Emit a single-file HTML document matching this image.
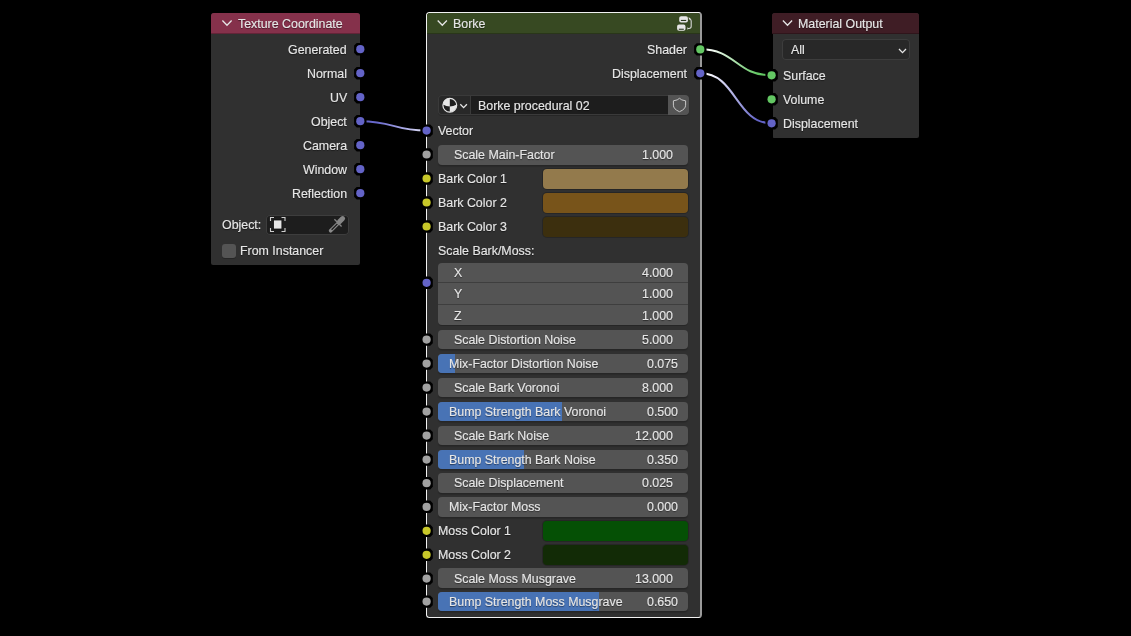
<!DOCTYPE html>
<html><head><meta charset="utf-8"><title>Blender Nodes</title>
<style>
html,body{margin:0;padding:0;background:#000;width:1131px;height:636px;overflow:hidden}
.r{position:absolute}
.t{position:absolute;text-shadow:0 1px 1px rgba(0,0,0,0.5);will-change:transform;font-family:"Liberation Sans",sans-serif;font-size:12.4px;line-height:20px;height:20px;color:#e6e6e6;white-space:nowrap;-webkit-text-stroke:0.15px #e6e6e6}
.ov{position:absolute;left:0;top:0}
</style></head><body>
<svg class="ov" width="1131" height="636" viewBox="0 0 1131 636"><defs>
<linearGradient id="g1" gradientUnits="userSpaceOnUse" x1="700" y1="0" x2="772" y2="0"><stop offset="0" stop-color="#ffffff"/><stop offset="0.2" stop-color="#eef8ee"/><stop offset="0.8" stop-color="#63c763"/><stop offset="1" stop-color="#63c763"/></linearGradient>
<linearGradient id="g2" gradientUnits="userSpaceOnUse" x1="700" y1="0" x2="772" y2="0"><stop offset="0" stop-color="#ffffff"/><stop offset="0.2" stop-color="#eeeefa"/><stop offset="0.8" stop-color="#6363c7"/><stop offset="1" stop-color="#6363c7"/></linearGradient>
<linearGradient id="g3" gradientUnits="userSpaceOnUse" x1="360" y1="0" x2="427" y2="0"><stop offset="0" stop-color="#6363c7"/><stop offset="0.25" stop-color="#6868cc"/><stop offset="0.65" stop-color="#a8a8e6"/><stop offset="1" stop-color="#e8e8f8"/></linearGradient>
</defs><path d="M700.5,49.3 C736.0,49.3 736.0,75.3 771.5,75.3" stroke="url(#g1)" stroke-width="2" fill="none"/><path d="M700.5,73.3 C736.0,73.3 736.0,123.3 771.5,123.3" stroke="url(#g2)" stroke-width="2" fill="none"/><path d="M360.3,121.2 C393.45000000000005,121.2 393.45000000000005,130.6 426.6,130.6" stroke="url(#g3)" stroke-width="2" fill="none"/></svg>
<div class="r" style="left:211px;top:13px;width:149px;height:252px;background:#303030;border-radius:3px 3px 2px 2px;"></div>
<div class="r" style="left:211px;top:13px;width:149px;height:21px;background:#85314b;border-radius:3px 3px 0 0;"></div>
<div class="r" style="left:211px;top:33px;width:149px;height:1px;background:rgba(0,0,0,0.25);border-radius:0;"></div>
<div class="t" style="left:238px;top:14px;">Texture Coordinate</div>
<div class="t" style="right:784px;top:40px;">Generated</div>
<div class="t" style="right:784px;top:64px;">Normal</div>
<div class="t" style="right:784px;top:88px;">UV</div>
<div class="t" style="right:784px;top:112px;">Object</div>
<div class="t" style="right:784px;top:136px;">Camera</div>
<div class="t" style="right:784px;top:160px;">Window</div>
<div class="t" style="right:784px;top:184px;">Reflection</div>
<div class="t" style="left:222px;top:215px;">Object:</div>
<div class="r" style="left:266px;top:214.5px;width:82.5px;height:20px;background:#1d1d1d;border-radius:4px;box-shadow:inset 0 0 0 1px #3d3d3d"></div>
<div class="r" style="left:222px;top:244px;width:14px;height:14px;background:#545454;border-radius:3px;box-shadow:0 1px 0 #262626"></div>
<div class="t" style="left:240px;top:241px;">From Instancer</div>
<div class="r" style="left:426px;top:12px;width:276px;height:606px;background:#303030;border-radius:3.5px;box-sizing:border-box;border:1px solid #f2f2f2;border-right:2px solid #9a9a9a"></div>
<div class="r" style="left:427px;top:13px;width:273px;height:21px;background:#374922;border-radius:2.5px 2.5px 0 0;"></div>
<div class="r" style="left:427px;top:33px;width:273px;height:1px;background:rgba(0,0,0,0.25);border-radius:0;"></div>
<div class="t" style="left:453px;top:14px;">Borke</div>
<div class="t" style="right:444px;top:40px;">Shader</div>
<div class="t" style="right:444px;top:64px;">Displacement</div>
<div class="r" style="left:438px;top:94.5px;width:251px;height:20.5px;background:#1d1d1d;border-radius:4px;box-shadow:inset 0 0 0 1px #3a3a3a, 0 1px 0 #262626"></div>
<div class="r" style="left:438px;top:94.5px;width:33px;height:20.5px;background:#282828;border-radius:4px 0 0 4px;box-shadow:inset 0 0 0 1px #3a3a3a"></div>
<div class="r" style="left:668px;top:94.5px;width:21px;height:20.5px;background:#545454;border-radius:0 4px 4px 0;"></div>
<div class="t" style="left:478px;top:96px;">Borke procedural 02</div>
<div class="t" style="left:438px;top:121px;">Vector</div>
<div class="r" style="left:438px;top:145px;width:250px;height:20px;background:#545454;border-radius:4px;box-shadow:0 1px 0 #262626, 0 2px 1px rgba(0,0,0,0.12)"></div>
<div class="t" style="left:454px;top:145px;">Scale Main-Factor</div>
<div class="t" style="right:458px;top:145px;">1.000</div>
<div class="t" style="left:438px;top:169px;">Bark Color 1</div>
<div class="r" style="left:543px;top:168.8px;width:145px;height:20px;background:#937a4c;border-radius:4px;box-shadow:0 0 0 1px #262626"></div>
<div class="t" style="left:438px;top:193px;">Bark Color 2</div>
<div class="r" style="left:543px;top:192.8px;width:145px;height:20px;background:#78541a;border-radius:4px;box-shadow:0 0 0 1px #262626"></div>
<div class="t" style="left:438px;top:217px;">Bark Color 3</div>
<div class="r" style="left:543px;top:216.8px;width:145px;height:20px;background:#3c2f0e;border-radius:4px;box-shadow:0 0 0 1px #262626"></div>
<div class="t" style="left:438px;top:241px;">Scale Bark/Moss:</div>
<div class="r" style="left:438px;top:263px;width:250px;height:62px;background:#545454;border-radius:4px;box-shadow:0 1px 0 #262626"></div>
<div class="r" style="left:438px;top:282px;width:250px;height:1px;background:#3e3e3e;border-radius:0;"></div>
<div class="r" style="left:438px;top:303.5px;width:250px;height:1px;background:#3e3e3e;border-radius:0;"></div>
<div class="t" style="left:454px;top:263px;">X</div>
<div class="t" style="right:458px;top:263px;">4.000</div>
<div class="t" style="left:454px;top:284px;">Y</div>
<div class="t" style="right:458px;top:284px;">1.000</div>
<div class="t" style="left:454px;top:306px;">Z</div>
<div class="t" style="right:458px;top:306px;">1.000</div>
<div class="r" style="left:438px;top:329.7px;width:250px;height:19.4px;background:#545454;border-radius:4px;box-shadow:0 1px 0 #262626, 0 2px 1px rgba(0,0,0,0.12)"></div>
<div class="t" style="left:454px;top:330px;">Scale Distortion Noise</div>
<div class="t" style="right:458px;top:330px;">5.000</div>
<div class="r" style="left:438px;top:353.8px;width:250px;height:19.4px;background:#545454;border-radius:4px;box-shadow:0 1px 0 #262626, 0 2px 1px rgba(0,0,0,0.12)"></div>
<div class="r" style="left:438px;top:353.8px;width:16.825px;height:19.4px;background:#4873b5;border-radius:4px 0 0 4px;"></div>
<div class="t" style="left:449px;top:354px;">Mix-Factor Distortion Noise</div>
<div class="t" style="right:453px;top:354px;">0.075</div>
<div class="r" style="left:438px;top:377.8px;width:250px;height:19.4px;background:#545454;border-radius:4px;box-shadow:0 1px 0 #262626, 0 2px 1px rgba(0,0,0,0.12)"></div>
<div class="t" style="left:454px;top:378px;">Scale Bark Voronoi</div>
<div class="t" style="right:458px;top:378px;">8.000</div>
<div class="r" style="left:438px;top:401.7px;width:250px;height:19.3px;background:#545454;border-radius:4px;box-shadow:0 1px 0 #262626, 0 2px 1px rgba(0,0,0,0.12)"></div>
<div class="r" style="left:438px;top:401.7px;width:123.5px;height:19.3px;background:#4873b5;border-radius:4px 0 0 4px;"></div>
<div class="t" style="left:449px;top:402px;">Bump Strength Bark Voronoi</div>
<div class="t" style="right:453px;top:402px;">0.500</div>
<div class="r" style="left:438px;top:425.7px;width:250px;height:19.4px;background:#545454;border-radius:4px;box-shadow:0 1px 0 #262626, 0 2px 1px rgba(0,0,0,0.12)"></div>
<div class="t" style="left:454px;top:426px;">Scale Bark Noise</div>
<div class="t" style="right:458px;top:426px;">12.000</div>
<div class="r" style="left:438px;top:449.9px;width:250px;height:19.3px;background:#545454;border-radius:4px;box-shadow:0 1px 0 #262626, 0 2px 1px rgba(0,0,0,0.12)"></div>
<div class="r" style="left:438px;top:449.9px;width:85.85px;height:19.3px;background:#4873b5;border-radius:4px 0 0 4px;"></div>
<div class="t" style="left:449px;top:450px;">Bump Strength Bark Noise</div>
<div class="t" style="right:453px;top:450px;">0.350</div>
<div class="r" style="left:438px;top:473.1px;width:250px;height:19.7px;background:#545454;border-radius:4px;box-shadow:0 1px 0 #262626, 0 2px 1px rgba(0,0,0,0.12)"></div>
<div class="t" style="left:454px;top:473px;">Scale Displacement</div>
<div class="t" style="right:458px;top:473px;">0.025</div>
<div class="r" style="left:438px;top:496.7px;width:250px;height:20px;background:#545454;border-radius:4px;box-shadow:0 1px 0 #262626, 0 2px 1px rgba(0,0,0,0.12)"></div>
<div class="r" style="left:438px;top:496.7px;width:0px;height:20px;background:#4873b5;border-radius:4px 0 0 4px;"></div>
<div class="t" style="left:449px;top:497px;">Mix-Factor Moss</div>
<div class="t" style="right:453px;top:497px;">0.000</div>
<div class="t" style="left:438px;top:521px;">Moss Color 1</div>
<div class="r" style="left:543px;top:520.8px;width:145px;height:20px;background:#055005;border-radius:4px;box-shadow:0 0 0 1px #262626"></div>
<div class="t" style="left:438px;top:545px;">Moss Color 2</div>
<div class="r" style="left:543px;top:544.8px;width:145px;height:20px;background:#122b06;border-radius:4px;box-shadow:0 0 0 1px #262626"></div>
<div class="r" style="left:438px;top:568.2px;width:250px;height:20px;background:#545454;border-radius:4px;box-shadow:0 1px 0 #262626, 0 2px 1px rgba(0,0,0,0.12)"></div>
<div class="t" style="left:454px;top:569px;">Scale Moss Musgrave</div>
<div class="t" style="right:458px;top:569px;">13.000</div>
<div class="r" style="left:438px;top:591.7px;width:250px;height:19.6px;background:#545454;border-radius:4px;box-shadow:0 1px 0 #262626, 0 2px 1px rgba(0,0,0,0.12)"></div>
<div class="r" style="left:438px;top:591.7px;width:161.15px;height:19.6px;background:#4873b5;border-radius:4px 0 0 4px;"></div>
<div class="t" style="left:449px;top:592px;">Bump Strength Moss Musgrave</div>
<div class="t" style="right:453px;top:592px;">0.650</div>
<div class="r" style="left:772px;top:13px;width:147px;height:125px;background:#303030;border-radius:3px 3px 2px 2px;"></div>
<div class="r" style="left:772px;top:13px;width:147px;height:21px;background:#3f1d25;border-radius:3px 3px 0 0;"></div>
<div class="r" style="left:772px;top:33px;width:147px;height:1px;background:rgba(0,0,0,0.25);border-radius:0;"></div>
<div class="r" style="left:772px;top:34px;width:1px;height:104px;background:#000;border-radius:0;"></div>
<div class="t" style="left:798px;top:14px;">Material Output</div>
<div class="r" style="left:782px;top:39.2px;width:128px;height:20.8px;background:#282828;border-radius:4px;box-shadow:inset 0 0 0 1px #3d3d3d"></div>
<div class="t" style="left:791px;top:40px;">All</div>
<div class="t" style="left:783px;top:66px;">Surface</div>
<div class="t" style="left:783px;top:90px;">Volume</div>
<div class="t" style="left:783px;top:114px;">Displacement</div>
<svg class="ov" width="1131" height="636" viewBox="0 0 1131 636"><polygon points="356.7,43.0 363.9,43.0 366.5,45.6 366.5,52.8 363.9,55.4 356.7,55.4 354.1,52.8 354.1,45.6" fill="#000"/><circle cx="360.3" cy="49.2" r="4.1" fill="#6363c7"/><polygon points="356.7,67.0 363.9,67.0 366.5,69.6 366.5,76.8 363.9,79.4 356.7,79.4 354.1,76.8 354.1,69.6" fill="#000"/><circle cx="360.3" cy="73.2" r="4.1" fill="#6363c7"/><polygon points="356.7,91.0 363.9,91.0 366.5,93.6 366.5,100.8 363.9,103.4 356.7,103.4 354.1,100.8 354.1,93.6" fill="#000"/><circle cx="360.3" cy="97.2" r="4.1" fill="#6363c7"/><polygon points="356.7,115.0 363.9,115.0 366.5,117.6 366.5,124.8 363.9,127.4 356.7,127.4 354.1,124.8 354.1,117.6" fill="#000"/><circle cx="360.3" cy="121.2" r="4.1" fill="#6363c7"/><polygon points="356.7,139.0 363.9,139.0 366.5,141.6 366.5,148.8 363.9,151.4 356.7,151.4 354.1,148.8 354.1,141.6" fill="#000"/><circle cx="360.3" cy="145.2" r="4.1" fill="#6363c7"/><polygon points="356.7,163.0 363.9,163.0 366.5,165.6 366.5,172.8 363.9,175.4 356.7,175.4 354.1,172.8 354.1,165.6" fill="#000"/><circle cx="360.3" cy="169.2" r="4.1" fill="#6363c7"/><polygon points="356.7,187.0 363.9,187.0 366.5,189.6 366.5,196.8 363.9,199.4 356.7,199.4 354.1,196.8 354.1,189.6" fill="#000"/><circle cx="360.3" cy="193.2" r="4.1" fill="#6363c7"/><polygon points="696.7,43.2 703.9,43.2 706.5,45.8 706.5,53.0 703.9,55.6 696.7,55.6 694.1,53.0 694.1,45.8" fill="#000"/><circle cx="700.3" cy="49.4" r="4.1" fill="#63c763"/><polygon points="696.7,67.1 703.9,67.1 706.5,69.7 706.5,76.9 703.9,79.5 696.7,79.5 694.1,76.9 694.1,69.7" fill="#000"/><circle cx="700.3" cy="73.3" r="4.1" fill="#6363c7"/><polygon points="423.0,124.4 430.2,124.4 432.8,127.0 432.8,134.2 430.2,136.8 423.0,136.8 420.4,134.2 420.4,127.0" fill="#000"/><circle cx="426.6" cy="130.6" r="4.1" fill="#6363c7"/><polygon points="423.0,148.3 430.2,148.3 432.8,150.9 432.8,158.1 430.2,160.7 423.0,160.7 420.4,158.1 420.4,150.9" fill="#000"/><circle cx="426.6" cy="154.5" r="4.1" fill="#a1a1a1"/><polygon points="423.0,172.3 430.2,172.3 432.8,174.9 432.8,182.1 430.2,184.7 423.0,184.7 420.4,182.1 420.4,174.9" fill="#000"/><circle cx="426.6" cy="178.5" r="4.1" fill="#c7c729"/><polygon points="423.0,196.3 430.2,196.3 432.8,198.9 432.8,206.1 430.2,208.7 423.0,208.7 420.4,206.1 420.4,198.9" fill="#000"/><circle cx="426.6" cy="202.5" r="4.1" fill="#c7c729"/><polygon points="423.0,220.3 430.2,220.3 432.8,222.9 432.8,230.1 430.2,232.7 423.0,232.7 420.4,230.1 420.4,222.9" fill="#000"/><circle cx="426.6" cy="226.5" r="4.1" fill="#c7c729"/><polygon points="423.0,276.6 430.2,276.6 432.8,279.2 432.8,286.4 430.2,289.0 423.0,289.0 420.4,286.4 420.4,279.2" fill="#000"/><circle cx="426.6" cy="282.8" r="4.1" fill="#6363c7"/><polygon points="423.0,333.4 430.2,333.4 432.8,336.0 432.8,343.2 430.2,345.8 423.0,345.8 420.4,343.2 420.4,336.0" fill="#000"/><circle cx="426.6" cy="339.6" r="4.1" fill="#a1a1a1"/><polygon points="423.0,357.4 430.2,357.4 432.8,360.0 432.8,367.2 430.2,369.8 423.0,369.8 420.4,367.2 420.4,360.0" fill="#000"/><circle cx="426.6" cy="363.6" r="4.1" fill="#a1a1a1"/><polygon points="423.0,381.4 430.2,381.4 432.8,384.0 432.8,391.2 430.2,393.8 423.0,393.8 420.4,391.2 420.4,384.0" fill="#000"/><circle cx="426.6" cy="387.6" r="4.1" fill="#a1a1a1"/><polygon points="423.0,405.4 430.2,405.4 432.8,408.0 432.8,415.2 430.2,417.8 423.0,417.8 420.4,415.2 420.4,408.0" fill="#000"/><circle cx="426.6" cy="411.6" r="4.1" fill="#a1a1a1"/><polygon points="423.0,429.4 430.2,429.4 432.8,432.0 432.8,439.2 430.2,441.8 423.0,441.8 420.4,439.2 420.4,432.0" fill="#000"/><circle cx="426.6" cy="435.6" r="4.1" fill="#a1a1a1"/><polygon points="423.0,453.4 430.2,453.4 432.8,456.0 432.8,463.2 430.2,465.8 423.0,465.8 420.4,463.2 420.4,456.0" fill="#000"/><circle cx="426.6" cy="459.6" r="4.1" fill="#a1a1a1"/><polygon points="423.0,477.0 430.2,477.0 432.8,479.6 432.8,486.8 430.2,489.4 423.0,489.4 420.4,486.8 420.4,479.6" fill="#000"/><circle cx="426.6" cy="483.2" r="4.1" fill="#a1a1a1"/><polygon points="423.0,500.6 430.2,500.6 432.8,503.2 432.8,510.4 430.2,513.0 423.0,513.0 420.4,510.4 420.4,503.2" fill="#000"/><circle cx="426.6" cy="506.8" r="4.1" fill="#a1a1a1"/><polygon points="423.0,524.6 430.2,524.6 432.8,527.2 432.8,534.4 430.2,537.0 423.0,537.0 420.4,534.4 420.4,527.2" fill="#000"/><circle cx="426.6" cy="530.8" r="4.1" fill="#c7c729"/><polygon points="423.0,548.6 430.2,548.6 432.8,551.2 432.8,558.4 430.2,561.0 423.0,561.0 420.4,558.4 420.4,551.2" fill="#000"/><circle cx="426.6" cy="554.8" r="4.1" fill="#c7c729"/><polygon points="423.0,572.4 430.2,572.4 432.8,575.0 432.8,582.2 430.2,584.8 423.0,584.8 420.4,582.2 420.4,575.0" fill="#000"/><circle cx="426.6" cy="578.6" r="4.1" fill="#a1a1a1"/><polygon points="423.0,595.4 430.2,595.4 432.8,598.0 432.8,605.2 430.2,607.8 423.0,607.8 420.4,605.2 420.4,598.0" fill="#000"/><circle cx="426.6" cy="601.6" r="4.1" fill="#a1a1a1"/><polygon points="768.0,69.1 775.2,69.1 777.8,71.7 777.8,78.9 775.2,81.5 768.0,81.5 765.4,78.9 765.4,71.7" fill="#000"/><circle cx="771.6" cy="75.3" r="4.1" fill="#63c763"/><polygon points="768.0,93.1 775.2,93.1 777.8,95.7 777.8,102.9 775.2,105.5 768.0,105.5 765.4,102.9 765.4,95.7" fill="#000"/><circle cx="771.6" cy="99.3" r="4.1" fill="#63c763"/><polygon points="768.0,117.1 775.2,117.1 777.8,119.7 777.8,126.9 775.2,129.5 768.0,129.5 765.4,126.9 765.4,119.7" fill="#000"/><circle cx="771.6" cy="123.3" r="4.1" fill="#6363c7"/><path d="M222.4,20.5 L227,25.2 L231.6,20.5" stroke="#e6e6e6" stroke-width="1.3" fill="none"/><path d="M437.7,20.5 L442.3,25.2 L446.90000000000003,20.5" stroke="#e6e6e6" stroke-width="1.3" fill="none"/><path d="M782.9,20.5 L787.5,25.2 L792.1,20.5" stroke="#e6e6e6" stroke-width="1.3" fill="none"/><path d="M899,49 L902.5,52.6 L906,49" stroke="#e6e6e6" stroke-width="1.3" fill="none"/><path d="M460.3,104.2 L463.6,107.6 L466.9,104.2" stroke="#e6e6e6" stroke-width="1.3" fill="none"/><circle cx="449.8" cy="105.2" r="6.9" fill="#1e1e1e"/><path d="M449.8,106.5 L449.8,98.3 A6.9,6.9 0 0 0 442.9,104.6 Q446.3,106.5 449.8,106.5 Z" fill="#e6e6e6"/><path d="M449.8,106.5 Q453.3,106.5 456.7,104.6 A6.9,6.9 0 0 1 449.8,112.1 Z" fill="#e6e6e6"/><circle cx="449.8" cy="105.2" r="6.9" fill="none" stroke="#e6e6e6" stroke-width="1.2"/><path d="M679.5,98.3 L681.8,99.9 L685.6,100.8 L685.6,105.2 Q685.6,109.2 679.5,111.7 Q673.4,109.2 673.4,105.2 L673.4,100.8 L677.2,99.9 Z" stroke="#c8c8c8" stroke-width="1" fill="none"/><rect x="679.2" y="16.2" width="8.7" height="6.2" rx="1.9" fill="#e6e6e6"/><rect x="680.9" y="19.9" width="5.3" height="1.1" fill="#2c3a20"/><rect x="677.1" y="24.6" width="8.4" height="6.1" rx="1.9" fill="#e6e6e6"/><rect x="678.8" y="28.7" width="5" height="1.1" fill="#2c3a20"/><path d="M689.6,18.6 Q691.2,19.6 691.2,21 V26.3 Q691.2,28.5 689,28.5 H688.2" stroke="#d8d8d8" stroke-width="1.1" fill="none"/><path d="M688.6,17 L690.6,18.8 L689,19.8 Z" fill="#e6e6e6"/><path d="M687.4,27.3 L689,28.5 L687.4,29.7 Z" fill="#e6e6e6"/><path d="M270.5,221 V217.5 H274 M281.5,217.5 H285 V221 M285,228 V231.5 H281.5 M274,231.5 H270.5 V228" stroke="#cfcfcf" stroke-width="1.1" fill="none"/><rect x="273.5" y="220" width="8.4" height="9" fill="#e6e6e6" stroke="#111" stroke-width="0.8"/><path d="M330.6,230.8 L338.2,223.2" stroke="#8a8a8a" stroke-width="3.6" stroke-linecap="round" fill="none"/><path d="M331.6,229.8 L337.4,224" stroke="#1d1d1d" stroke-width="1.3" fill="none"/><path d="M339.4,221.8 L342.6,218.6" stroke="#858585" stroke-width="5" stroke-linecap="round" fill="none"/><path d="M334.4,219.3 L341.6,226.5" stroke="#858585" stroke-width="1.3" fill="none"/></svg>
</body></html>
